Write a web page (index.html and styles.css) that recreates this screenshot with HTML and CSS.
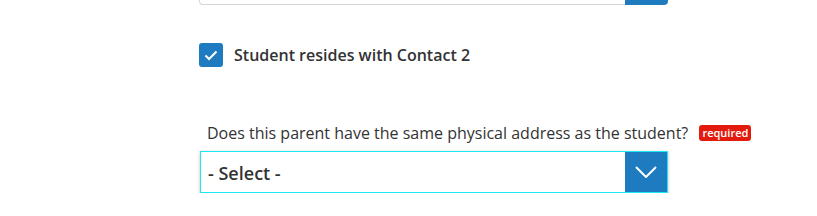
FILE: index.html
```html
<!DOCTYPE html>
<html lang="en">
<head>
  <meta charset="UTF-8" />
  <title>Contact 2</title>
  <link rel="stylesheet" href="styles.css">
</head>
<body>

<div class="form">
  <div class="prev-field">
    <div class="prev-input"></div>
    <div class="prev-btn"></div>
  </div>

  <label class="check-row">
    <span class="check-box">
      <svg width="14" height="11" viewBox="0 0 14 11"><path d="M1.5 5.5 L5 9 L12.5 1.5" fill="none" stroke="#fff" stroke-width="2"/></svg>
    </span>
    <span class="check-label">Student resides with Contact 2</span>
  </label>

  <div class="question">
    Does this parent have the same physical address as the student?
    <span class="badge">required</span>
  </div>

  <div class="select">
    <span class="select-text">- Select -</span>
    <span class="select-btn">
      <svg width="22" height="12" viewBox="0 0 22 12"><path d="M1 1 L11 11 L21 1" fill="none" stroke="#fff" stroke-width="2"/></svg>
    </span>
  </div>
</div>

</body>
</html>
```

FILE: styles.css
```css
body {
  margin: 0;
  background: #fff;
  font-family: "Open Sans", Arial, sans-serif;
  color: #333;
}
.form {
  width: 469px;
  margin-left: 199px;
  display: flex;
  flex-direction: column;
}
.prev-field {
  display: flex;
  height: 5px;
}
.prev-input {
  flex: 1;
  border: 1px solid #d6d6d6;
  border-top: none;
  border-right: none;
  border-radius: 0 0 0 4px;
}
.prev-btn {
  width: 43px;
  background: #1f7bbf;
  border-radius: 0 0 4px 0;
}
.check-row {
  display: flex;
  align-items: center;
  margin-top: 38px;
  height: 24px;
}
.check-box {
  width: 24px;
  height: 24px;
  background: #1f7bbf;
  border-radius: 3px;
  display: flex;
  justify-content: center;
  align-items: center;
}
.check-label {
  margin-left: 11px;
  font-size: 16px;
  font-weight: 600;
  color: #333;
}
.question {
  margin-top: 54px;
  padding-left: 8px;
  font-size: 16px;
  line-height: 24px;
  color: #333;
  white-space: nowrap;
}
.badge {
  display: inline-block;
  margin-left: 7px;
  padding: 0 3px;
  height: 16px;
  line-height: 16px;
  font-size: 11px;
  font-weight: 600;
  color: #fff;
  background: #e31b0c;
  border-radius: 3px;
  vertical-align: 2px;
}
.select {
  display: flex;
  margin-top: 6px;
  margin-left: 1px;
  height: 42px;
  border: 1px solid #1ee6f2;
  box-shadow: 0 1px 3px rgba(0,0,0,0.25);
  box-sizing: border-box;
}
.select-text {
  flex: 1;
  padding-left: 7px;
  padding-top: 2px;
  font-size: 18px;
  font-weight: 600;
  line-height: 38px;
  color: #333;
}
.select-btn {
  width: 42px;
  background: #1f7bbf;
  display: flex;
  justify-content: center;
  align-items: center;
}
```
